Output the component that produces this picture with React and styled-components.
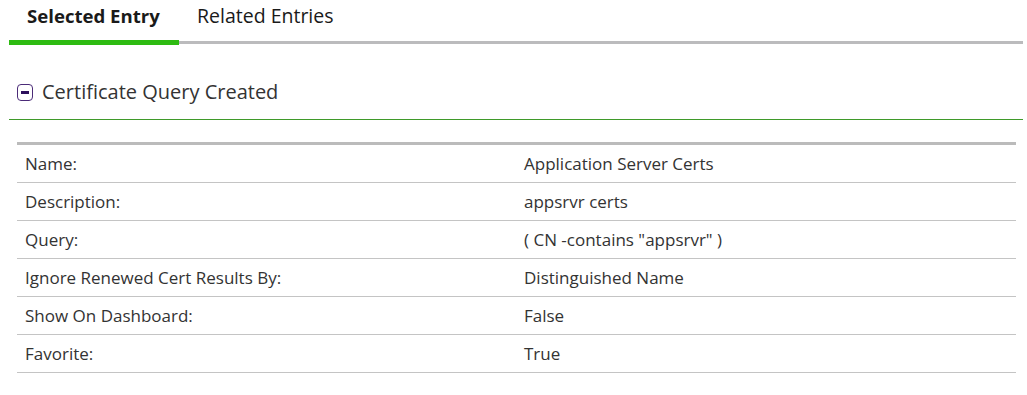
import React from 'react'
import styled, { createGlobalStyle } from 'styled-components'

const GlobalStyle = createGlobalStyle`
  body {
    margin: 0;
    background: #fff;
    font-family: "Open Sans", Lato, sans-serif;
    color: #333;
  }
`

const rows = [
  ['Name:', 'Application Server Certs'],
  ['Description:', 'appsrvr certs'],
  ['Query:', '( CN -contains "appsrvr" )'],
  ['Ignore Renewed Cert Results By:', 'Distinguished Name'],
  ['Show On Dashboard:', 'False'],
  ['Favorite:', 'True'],
]

const App = () => {
  return (
    <Page>
      <GlobalStyle />
      <Tabs>
        <Tab active>Selected Entry</Tab>
        <Tab>Related Entries</Tab>
      </Tabs>
      <Section>
        <SectionHeader>
          <Toggle><span /></Toggle>
          <SectionTitle>Certificate Query Created</SectionTitle>
        </SectionHeader>
        <Table>
          <tbody>
            {rows.map(([label, value]) => (
              <tr key={label}>
                <Label>{label}</Label>
                <Value>{value}</Value>
              </tr>
            ))}
          </tbody>
        </Table>
      </Section>
    </Page>
  )
}

const Page = styled.div`
  padding: 0 4px 0 9px;
`

const Tabs = styled.div`
  display: flex;
  border-bottom: 3px solid #bbbbbd;
  height: 41px;
`

const Tab = styled.div`
  box-sizing: border-box;
  height: 45px;
  padding: 4px 18px 0;
  font-size: ${p => (p.active ? '18.6px' : '19.5px')};
  line-height: 24px;
  color: #1a1a1a;
  font-weight: ${p => (p.active ? 700 : 400)};
  border-bottom: ${p => (p.active ? '5px solid #2ebb12' : 'none')};
  min-width: ${p => (p.active ? '170px' : 'auto')};
`

const Section = styled.div`
  margin-top: 22px;
`

const SectionHeader = styled.div`
  display: flex;
  align-items: center;
  gap: 9px;
  padding: 0 8px;
  height: 53px;
  border-bottom: 1px solid #3f9a2a;
`

const Toggle = styled.div`
  box-sizing: border-box;
  width: 16px;
  height: 17px;
  border: 1.5px solid #4b2b78;
  border-radius: 4px;
  display: flex;
  align-items: center;
  justify-content: center;

  span {
    width: 8px;
    height: 3px;
    background: #2d0f5c;
  }
`

const SectionTitle = styled.div`
  font-size: 20px;
  color: #333;
  margin-top: -2px;
`

const Table = styled.table`
  margin: 22px 8px 0;
  width: calc(100% - 15px);
  border-collapse: collapse;
  border-top: 3px solid #bbbbbb;
  font-size: 17px;
  color: #333;

  td {
    height: 37px;
    border-bottom: 1px solid #c4c4c4;
    padding: 0 8px;
    vertical-align: middle;
  }
`

const Label = styled.td`
  width: 483px;
`

const Value = styled.td``

export default App
